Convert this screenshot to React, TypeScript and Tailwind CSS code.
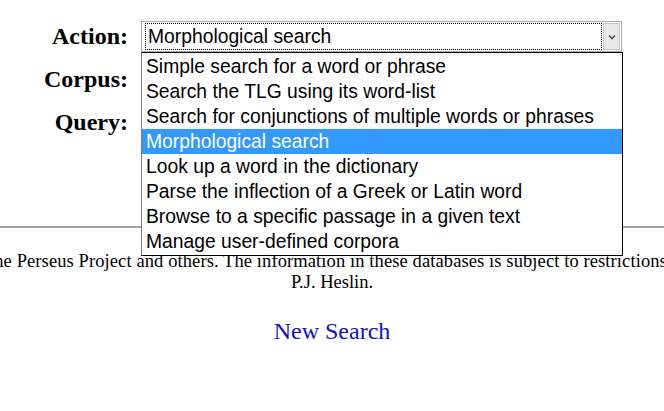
import React from "react";

const options = [
  "Simple search for a word or phrase",
  "Search the TLG using its word-list",
  "Search for conjunctions of multiple words or phrases",
  "Morphological search",
  "Look up a word in the dictionary",
  "Parse the inflection of a Greek or Latin word",
  "Browse to a specific passage in a given text",
  "Manage user-defined corpora",
];

const serif = "font-['Liberation_Serif','Times_New_Roman',serif]";
const sans = "font-['Liberation_Sans',Arial,sans-serif]";

function Label({ children }: { children: React.ReactNode }) {
  return (
    <div className={`${serif} w-[128px] text-right text-[24px] font-bold leading-[27px] text-black`}>
      {children}
    </div>
  );
}

export default function App() {
  return (
    <div className="relative h-[411px] w-[664px] overflow-hidden bg-white">
      {/* Form table */}
      <div className="pt-[15px]">
        <div className="flex h-[43px] items-center gap-[13px]">
          <Label>Action:</Label>
          <div className="flex h-[31px] w-[481px] items-stretch border border-[#a9a9a9] bg-white p-px">
            <div className={`${sans} ml-[2px] flex flex-1 items-center border border-dotted border-black pl-[2px] pt-[2px] text-[19.3px] text-black`}>
              Morphological search
            </div>
            <div className="ml-px flex w-[17px] items-center justify-center border border-[#c6c6c6] bg-[#e8e8e8]">
              <svg width="8" height="6" viewBox="0 0 8 6">
                <path d="M1 1.5 L4 4.5 L7 1.5" fill="none" stroke="#555" strokeWidth="1.6" />
              </svg>
            </div>
          </div>
        </div>
        <div className="flex h-[43px] items-center gap-[13px]">
          <Label>Corpus:</Label>
          <div className="h-[28px] w-[300px] border border-[#a9a9a9]" />
        </div>
        <div className="flex h-[43px] items-center gap-[13px]">
          <Label>Query:</Label>
          <div className="h-[28px] w-[300px] border border-[#a9a9a9]" />
        </div>
      </div>

      <hr className="mt-[82px] border-t-2 border-[#a3a3a3]" />

      <div className={`${serif} text-center text-[18.5px] leading-[21px] text-black`}>
        <div className="mt-[23px] flex justify-start whitespace-nowrap tracking-[0.1px]">
          <span className="ml-[-11px]">
            the Perseus Project and others. The information in these databases is subject to restrictions
          </span>
        </div>
        <div>P.J. Heslin.</div>
        <div className="mt-[25px] text-[24px] leading-[27px]">
          <a href="#" className="text-[#1111cc]">
            New Search
          </a>
        </div>
      </div>

      {/* Open dropdown list */}
      <div className="absolute left-[141px] top-[52px] w-[482px] border border-black border-l-[#7a7a7a] bg-white py-px">
        {options.map((o) => (
          <div
            key={o}
            className={`${sans} h-[25px] pl-[4px] text-[19.3px] leading-[25px] ${
              o === "Morphological search" ? "bg-[#3399ff] text-white" : "text-black"
            }`}
          >
            {o}
          </div>
        ))}
      </div>
    </div>
  );
}
